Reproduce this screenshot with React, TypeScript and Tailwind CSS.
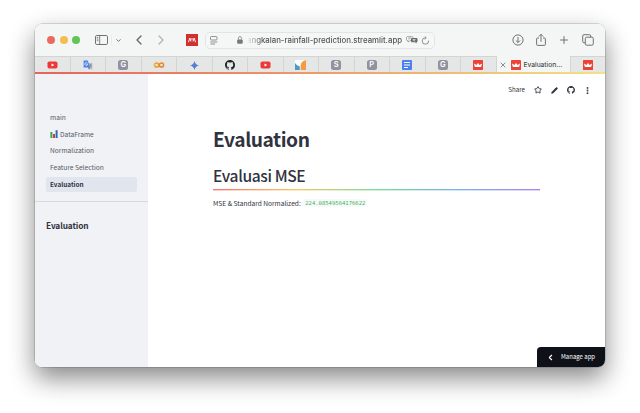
import React from 'react';
import { Star, Pencil, MoreVertical, ChevronLeft, ChevronRight, ChevronDown, Plus, X } from 'lucide-react';

const GitHub = ({ className }: { className: string }) => (
  <svg viewBox="0 0 16 16" className={className} fill="currentColor">
    <path d="M8 0C3.58 0 0 3.58 0 8c0 3.54 2.29 6.53 5.47 7.59.4.07.55-.17.55-.38 0-.19-.01-.82-.01-1.49-2.01.37-2.53-.49-2.69-.94-.09-.23-.48-.94-.82-1.13-.28-.15-.68-.52-.01-.53.63-.01 1.08.58 1.23.82.72 1.21 1.87.87 2.33.66.07-.52.28-.87.51-1.07-1.78-.2-3.64-.89-3.64-3.95 0-.87.31-1.59.82-2.15-.08-.2-.36-1.02.08-2.12 0 0 .67-.21 2.2.82a7.6 7.6 0 0 1 4 0c1.53-1.04 2.2-.82 2.2-.82.44 1.1.16 1.92.08 2.12.51.56.82 1.27.82 2.15 0 3.07-1.87 3.75-3.65 3.95.29.25.54.73.54 1.48 0 1.07-.01 1.93-.01 2.2 0 .21.15.46.55.38A8 8 0 0 0 16 8c0-4.42-3.58-8-8-8z" />
  </svg>
);

const YouTube = () => (
  <svg viewBox="0 0 10 8" className="h-[8px] w-[11px]">
    <rect y="0.5" width="10" height="7" rx="1.8" fill="#ee3837" />
    <path d="M4 2.4v3.2L6.8 4z" fill="#fff" />
  </svg>
);

const Crown = () => (
  <svg viewBox="0 0 10 10" className="size-[10px] shrink-0">
    <rect width="10" height="10" rx="0.4" fill="#ed4238" />
    <path d="M.9 3.5 3.5 4.9 5 3.1l1.5 1.8 2.6-1.4L8.1 7H1.9z" fill="#fff" />
  </svg>
);

const Letter = ({ children }: { children: string }) => (
  <span className="flex size-[10px] items-center justify-center rounded-[2.5px] bg-[#92929f] text-[7.5px] leading-[10px] font-semibold text-white">{children}</span>
);

const Translate = () => (
  <svg viewBox="0 0 10 10" className="size-[10px]">
    <path d="M4 3h5.3v6.2H6z" fill="#b9bcc3" />
    <path d="M.6.5h4.2L7 7.4H.6z" fill="#4c82ee" />
    <path d="m5 7.4 2 0-1 2z" fill="#3266d5" />
    <path d="M4.5 3.2A1.4 1.4 0 1 0 4.7 4.2H3.4" stroke="#fff" strokeWidth=".7" fill="none" />
    <path d="M6.4 5h2.4M7.6 4.3V5M8.4 5 6.8 7.2M7 5.6l1.6 1.8" stroke="#69707c" strokeWidth=".5" fill="none" />
  </svg>
);

const Colab = () => (
  <svg viewBox="0 0 12 8" className="h-[8px] w-[12px]" fill="none" strokeWidth="1.5">
    <circle cx="3.6" cy="4" r="2.1" stroke="#ee9b2e" />
    <circle cx="8.5" cy="4" r="2.1" stroke="#e8872e" />
    <path d="M2.1 5.5a2.1 2.1 0 0 1 0-3" stroke="#f5b945" />
  </svg>
);

const Gemini = () => (
  <svg viewBox="0 0 10 10" className="size-[9px]">
    <defs>
      <linearGradient id="gem" x1="0" x2="1" y1="1" y2="0">
        <stop stopColor="#348bdc" />
        <stop offset="1" stopColor="#7775c9" />
      </linearGradient>
    </defs>
    <path d="M5 0Q6 4 10 5 6 6 5 10 4 6 0 5 4 4 5 0z" fill="url(#gem)" />
  </svg>
);

const Chart = () => (
  <svg viewBox="0 0 11 10" className="h-[10px] w-[11px]">
    <path fill="#fff" d="M0 0h11v10H0z" />
    <path fill="#4b9ac9" d="M0 3q1.5 2.6 4.8 3.4V10H0z" />
    <path fill="#f49c42" d="M5.6 10V5.4Q6 1.2 11 0v10z" />
  </svg>
);

const Docs = () => (
  <svg viewBox="0 0 10 10" className="size-[10px]">
    <rect width="10" height="10" rx="1" fill="#4b80f1" />
    <path d="M2 2.5h6M2 5h6M2 7.5h4" stroke="#fff" strokeWidth="1" />
  </svg>
);

const Mendeley = () => (
  <svg viewBox="0 0 12 12" className="ml-[16.5px] size-[12px] shrink-0">
    <path fill="#d22f30" d="M0 0h12v12H0z" />
    <path d="M2 8.2Q3.3 7.8 3.2 5.6M10 8.2Q8.7 7.8 8.8 5.6M3.4 4.8Q4.8 4.8 4.9 7.4M8.6 4.8Q7.2 4.8 7.1 7.4" stroke="#fff" strokeWidth="1" fill="none" />
    <circle cx="3.8" cy="4.8" r=".9" fill="#fff" />
    <circle cx="8.2" cy="4.8" r=".9" fill="#fff" />
    <circle cx="6" cy="5" r=".8" fill="#fff" />
  </svg>
);

const tabs = [
  <YouTube />, <Translate />, <Letter>G</Letter>, <Colab />, <Gemini />, <GitHub className="size-[10px] text-[#20242a]" />,
  <YouTube />, <Chart />, <Letter>S</Letter>, <Letter>P</Letter>, <Docs />, <Letter>G</Letter>, <Crown />,
];

const Toolbar = () => (
  <header className="flex h-[32px] shrink-0 items-center bg-[#f4f6f5] text-[#626464]">
    <div className="ml-[12px] flex gap-[4.5px]">
      <i className="size-[8px] rounded-full bg-[#ec6a5f]" />
      <i className="size-[8px] rounded-full bg-[#f4bf50]" />
      <i className="size-[8px] rounded-full bg-[#61c555]" />
    </div>
    <svg viewBox="0 0 13 10" className="ml-[15px] h-[10px] w-[13px]" fill="none" stroke="currentColor">
      <rect x=".5" y=".5" width="12" height="9" rx="1.3" strokeWidth=".9" />
      <path d="M4.7.5v9M1.8 2.5h1.5M1.8 4.1h1.5M1.8 5.7h1.5" strokeWidth=".8" />
    </svg>
    <span className="ml-[3px] h-[10px] w-px bg-[#e9ebea]" />
    <ChevronDown className="ml-[3px] size-[7px]" strokeWidth={3} />
    <ChevronLeft className="ml-[9px] size-[16px]" strokeWidth={1.9} />
    <ChevronRight className="ml-[6px] size-[16px] text-[#b1b3b2]" strokeWidth={1.9} />
    <Mendeley />
    <div className="ml-[7.5px] flex h-[17px] w-[230px] items-center rounded-[5px] border border-[#e3e5e4] bg-[#f5f7f6]">
      <svg viewBox="0 0 8 9" className="ml-[4px] h-[9px] w-[8px]" fill="none" stroke="#777978" strokeWidth=".8">
        <rect x=".5" y=".5" width="6.5" height="3.5" rx=".8" />
        <path d="M.3 6h7M.3 8h4.8" />
      </svg>
      <svg viewBox="0 0 6 8" className="ml-[19px] h-[8px] w-[6px]">
        <rect x=".2" y="3.4" width="5.5" height="4.3" rx=".8" fill="#777978" />
        <path d="M1.5 3.6V2a1.45 1.45 0 0 1 2.9 0v1.6" fill="none" stroke="#777978" strokeWidth=".7" />
      </svg>
      <span className="ml-[4px] w-[156px] shrink-0 bg-[linear-gradient(90deg,transparent,#4c4e4d_10%)] bg-clip-text text-[7.85px] leading-[12px] font-medium tracking-[-0.02px] whitespace-nowrap text-transparent">angkalan-rainfall-prediction.streamlit.app</span>
      <svg viewBox="0 0 12 8" className="ml-[3px] h-[8px] w-[12px] shrink-0" fill="none">
        <path d="M1.4.6H6q1 0 1 1v2q0 1-1 1H4L2 6V4.6h-.6q-.9 0-.9-1v-2q0-1 .9-1z" stroke="#777978" strokeWidth=".6" />
        <path d="M2 2h3M2.5 3.6 4.5 2" stroke="#777978" strokeWidth=".5" />
        <path d="M6 2h4.5q1 0 1 1v2.3q0 1-1 1v1.3L9 6.3H6q-1 0-1-1V3q0-1 1-1z" fill="#686a69" />
        <path d="M6.5 3.5h3M8 2.8v.7M9 3.5 7 5.5M7 3.8l2.3 1.7" stroke="#fff" strokeWidth=".5" />
      </svg>
      <svg viewBox="0 0 9 9" className="ml-[3px] size-[9px] shrink-0" fill="none" stroke="#777978" strokeWidth=".8">
        <path d="M7.6 4.6A3.2 3.2 0 1 1 4.8 1.8M3.8.4l1.5 1.4-1.5 1.5" />
      </svg>
    </div>
    <div className="mr-[11px] ml-auto flex items-center gap-[12px]">
      <svg viewBox="0 0 12 12" className="size-[12px]" fill="none" stroke="currentColor" strokeWidth=".9">
        <circle cx="6" cy="6" r="5.1" />
        <path d="M6 3v5.5M3.9 6.5 6 8.6l2.1-2.1" />
      </svg>
      <svg viewBox="0 0 10 13" className="h-[13px] w-[10px] -translate-y-[0.5px]" fill="none" stroke="currentColor" strokeWidth=".9">
        <path d="M3 4.5H1.6q-1 0-1 1v5.4q0 1 1 1h6.8q1 0 1-1V5.5q0-1-1-1H7M5 8.3V1M2.8 3 5 .8 7.2 3" />
      </svg>
      <Plus className="size-[12px]" strokeWidth={1.8} />
      <svg viewBox="0 0 12 12" className="size-[12px]" fill="none" stroke="currentColor" strokeWidth=".9">
        <rect x="3.3" y="3.2" width="8" height="8" rx="1.4" />
        <path d="M3.3 8.8H2Q.7 8.8.7 7.5V2Q.7.7 2 .7h5.4q1.3 0 1.3 1.3v1.2" />
      </svg>
    </div>
  </header>
);

const TabBar = () => (
  <div className="flex h-[17px] shrink-0 border-t border-[#d3d5d4] bg-[#e5e7e6]">
    {tabs.map((icon, i) => (
      <div key={i} className="flex w-[35.5px] shrink-0 items-center justify-center border-r border-[#d3d5d4]">{icon}</div>
    ))}
    <div className="-mt-px flex w-[73.5px] items-center bg-[#f4f6f5] pl-[2.5px]">
      <X className="size-[8px] text-[#626464]" strokeWidth={2.2} />
      <span className="ml-[3.5px] flex"><Crown /></span>
      <span className="ml-[3px] text-[6.6px] leading-[10px] font-medium whitespace-nowrap text-[#474948]">Evaluation...</span>
    </div>
    <div className="flex flex-1 items-center justify-center border-l border-[#d3d5d4]"><Crown /></div>
  </div>
);

const Bars = () => (
  <svg viewBox="0 0 8 8" className="mr-[2px] size-[8px] shrink-0">
    <path fill="#eff3f4" d="M0 0h8v8H0z" />
    <path fill="#35a850" d="M.4 2h2v6h-2z" />
    <path fill="#d73b35" d="M3 4h2v4H3z" />
    <path fill="#246bc2" d="M5.6.3h2V8h-2z" />
  </svg>
);

const nav = ['main', 'DataFrame', 'Normalization', 'Feature Selection', 'Evaluation'];

export default function App() {
  return (
    <div className="h-[413px] w-[640px] overflow-hidden bg-white pt-[24px] pl-[35px] font-['Inter',sans-serif]">
      <div className="h-[343px] w-[570px] rounded-[7px] shadow-[0_0_0_0.5px_rgba(0,0,0,0.25),0_11px_26px_rgba(0,0,0,0.48)]">
        <div className="flex h-full flex-col overflow-hidden rounded-[7px] bg-white">
          <Toolbar />
          <TabBar />
          <div className="h-[2px] shrink-0 -mt-px bg-[linear-gradient(90deg,#e5635d,#ed9c68_50%,#f3e286)]" />
          <div className="flex min-h-0 flex-1 font-['Noto_Sans_CJK_JP',sans-serif] text-[#31333f]">
            <aside className="w-[113px] shrink-0 bg-[#f0f2f6]">
              <nav className="flex flex-col gap-[1.7px] pt-[36px] pl-[11px]">
                {nav.map((name) => (
                  <a key={name} className={name === 'Evaluation'
                    ? 'flex h-[15px] w-[91px] items-center rounded-[2px] bg-[#e1e6ee] pl-[4px] text-[6.4px] leading-[15px] font-bold'
                    : 'flex h-[15px] w-[91px] items-center pl-[4px] text-[6.65px] leading-[15px] text-[#555864]'}>
                    {name === 'DataFrame' && <Bars />}
                    {name}
                  </a>
                ))}
              </nav>
              <hr className="mt-[9px] border-[#d7d9df]" />
              <h3 className="mt-[16px] ml-[11px] text-[8.3px] leading-[14px] font-bold tracking-[-0.12px]">Evaluation</h3>
            </aside>
            <main className="flex min-w-0 flex-1 flex-col">
              <div className="mt-[11px] mr-[13px] flex h-[10px] items-center self-end">
                <span className="text-[6.2px] leading-[10px]">Share</span>
                <Star className="ml-[9px] size-[8px]" strokeWidth={2.7} />
                <Pencil className="ml-[9px] size-[7px]" fill="currentColor" strokeWidth={2} />
                <GitHub className="ml-[9px] size-[8px]" />
                <MoreVertical className="ml-[8px] size-[9px]" strokeWidth={3} />
              </div>
              <section className="mt-[32px] ml-[65px] w-[327px]">
                <h1 className="text-[19.2px] leading-[24px] font-bold tracking-[-0.45px] whitespace-nowrap">Evaluation</h1>
                <h2 className="mt-[13px] text-[15.6px] leading-[22px] font-medium tracking-[-0.38px] whitespace-nowrap">Evaluasi MSE</h2>
                <svg viewBox="0 0 327 2" className="mt-[3px] block h-[2px] w-[327px]">
                  <defs>
                    <linearGradient id="rainbow">
                      <stop stopColor="#f6726a" />
                      <stop offset=".25" stopColor="#f6c765" />
                      <stop offset=".5" stopColor="#7adb98" />
                      <stop offset=".75" stopColor="#79b4ec" />
                      <stop offset="1" stopColor="#aa82ee" />
                    </linearGradient>
                  </defs>
                  <rect width="327" height="1.35" fill="url(#rainbow)" />
                </svg>
                <p className="mt-[6px] flex items-center text-[6.6px] leading-[12px] whitespace-nowrap">
                  <span>MSE &amp; Standard Normalized:</span>
                  <code className="ml-[2.5px] rounded-[2px] bg-[#f8f9fb] px-[2px] font-['DejaVu_Sans_Mono',monospace] text-[5.55px] leading-[8px] text-[#3fb45a]">224.08549564176622</code>
                </p>
              </section>
              <button className="mt-auto flex h-[20px] w-[68px] items-center self-end rounded-tl-[4px] bg-[#0e1117] pl-[9px] text-[6px] text-white">
                <ChevronLeft className="size-[9px]" strokeWidth={3} />
                <span className="ml-[6px] leading-[12px] whitespace-nowrap">Manage app</span>
              </button>
            </main>
          </div>
        </div>
      </div>
    </div>
  );
}
